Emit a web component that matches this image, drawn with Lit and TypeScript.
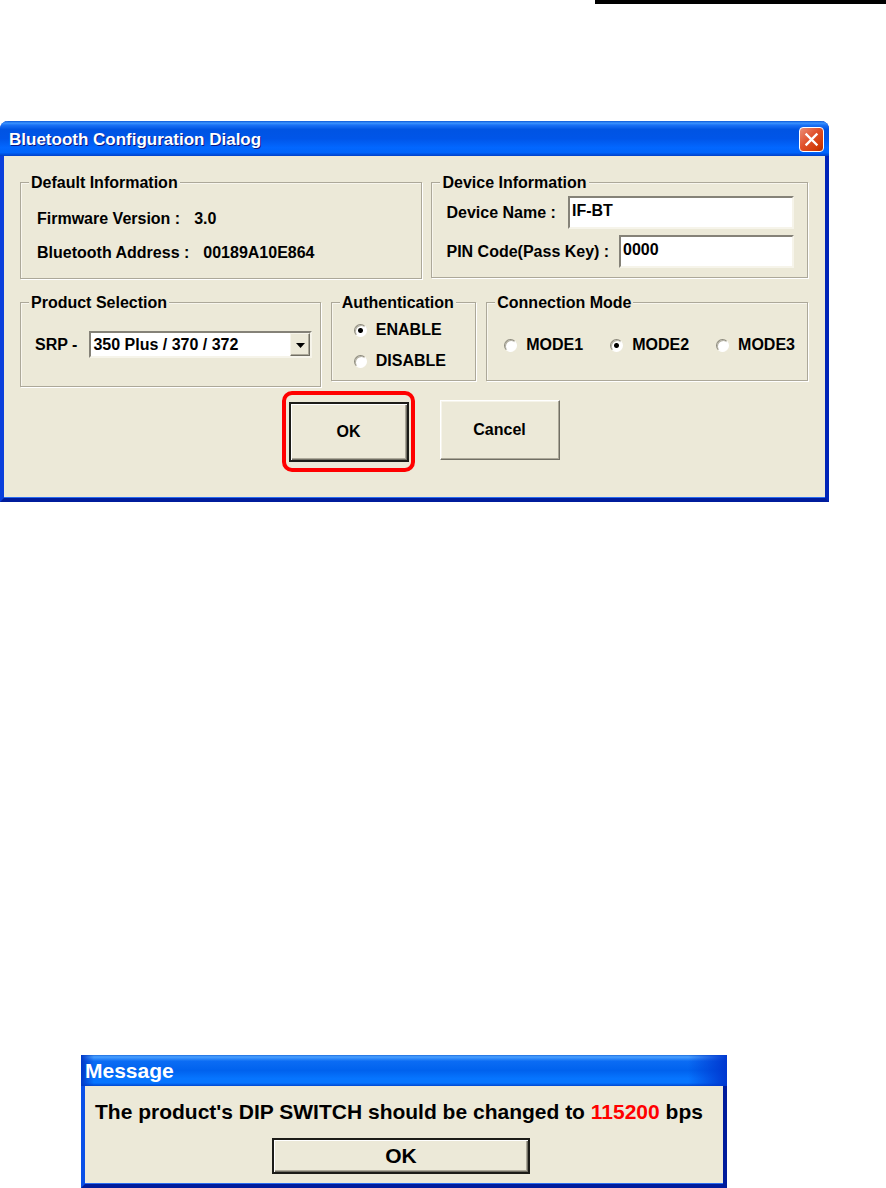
import { LitElement, html, css } from "lit";
import { customElement, property, state } from "lit/decorators.js";

const controls = css`
  * {
    box-sizing: border-box;
  }
  button {
    font: inherit;
    color: #000;
    background: #ece9d8;
    border: 1px solid;
    border-color: #fff #716f64 #716f64 #fff;
    box-shadow: inset -1px -1px #aca899, inset 1px 1px #f6f4ea;
    border-radius: 0;
    padding: 0;
  }
  button.default {
    border: 2px solid #1c1c18;
    box-shadow: inset 1px 1px #fff, inset -1px -1px #716f64, inset -2px -2px #aca899;
  }
`;

@customElement("bt-config-dialog")
class BtConfigDialog extends LitElement {
  @state() private mode = "MODE2";
  @state() private auth = "ENABLE";

  static styles = [
    controls,
    css`
      :host {
        display: block;
        color: #000;
        font: 700 16px/22px "Liberation Sans", Arial, sans-serif;
      }
      .window {
        background: #ece9d8;
        border: solid #0831d9;
        border-width: 0 4px 4px;
        border-color: #0a3fdc #0024b8 #001c9c #0a3fdc;
        border-radius: 8px 8px 0 0;
        box-shadow: inset 0 -1px #2a6cf0;
      }
      .titlebar {
        display: flex;
        align-items: center;
        justify-content: space-between;
        height: 35px;
        margin: 0 -4px;
        padding: 2px 5px 0 9px;
        border-radius: 8px 8px 0 0;
        color: #fff;
        text-shadow: 1px 1px #0a1883;
        background: linear-gradient(
          #0c58d8 0,
          #3a93ff 6%,
          #1a70f4 12%,
          #0054e3 24%,
          #0055e8 50%,
          #0267ff 76%,
          #0064fb 90%,
          #0040c8 100%
        );
      }
      h1 {
        margin: 0;
        font: inherit;
        font-size: 17px;
      }
      .close {
        display: flex;
        width: 25px;
        height: 25px;
        border: 1px solid #fff;
        border-radius: 4px;
        background: linear-gradient(135deg, #eb8f78, #e0512c 45%, #d23c08 80%, #b02c00);
        box-shadow: none;
      }
      .close svg {
        width: 23px;
        height: 23px;
      }
      .body {
        padding: 16px 17px 36px 16px;
      }
      .row {
        display: grid;
        align-items: start;
        gap: 10px;
      }
      .row.top {
        grid-template-columns: 403fr 377fr;
        gap: 9px;
        margin-bottom: 13px;
      }
      .row.middle {
        grid-template-columns: 302fr 146fr 323fr;
      }
      fieldset {
        min-width: 0;
        margin: 0;
        padding: 0;
        border: 1px solid #aca899;
        box-shadow: 1px 1px #fff, inset 1px 1px #f8f6ee;
      }
      legend {
        height: 20px;
        margin-left: 8px;
        padding: 0 2px;
        background: #ece9d8;
        white-space: nowrap;
      }
      .facts {
        display: grid;
        gap: 12px;
        margin: 0;
        padding: 16px 16px 14px;
      }
      .facts div {
        display: flex;
        gap: 14px;
      }
      .facts dd {
        margin: 0;
      }
      .fields {
        display: grid;
        gap: 6px;
        padding: 4px 13px 9px 14px;
      }
      .field {
        display: flex;
        align-items: center;
        justify-content: space-between;
        white-space: nowrap;
      }
      input[type="text"] {
        height: 33px;
        padding: 0 2px 4px;
        font: inherit;
        color: #000;
        background: #fff;
        border: 2px solid;
        border-color: #858278 #f6f4ea #f6f4ea #858278;
        border-radius: 0;
      }
      .name {
        width: 226px;
      }
      .pin {
        width: 175px;
      }
      .product {
        display: flex;
        align-items: center;
        gap: 12px;
        padding: 19px 8px 28px 14px;
        white-space: nowrap;
      }
      .combo {
        position: relative;
        flex: 1;
      }
      select {
        display: block;
        width: 100%;
        height: 27px;
        padding: 0 24px 0 2px;
        appearance: none;
        font: inherit;
        color: #000;
        background: #fff;
        border: 2px solid;
        border-color: #858278 #f6f4ea #f6f4ea #858278;
        border-radius: 0;
      }
      .arrow {
        position: absolute;
        top: 2px;
        right: 2px;
        width: 20px;
        height: 23px;
        pointer-events: none;
        background: #ece9d8;
        border: 1px solid;
        border-color: #f6f4ea #716f64 #716f64 #f6f4ea;
        box-shadow: inset -1px -1px #aca899;
      }
      .radios {
        display: flex;
        justify-content: space-between;
      }
      .auth {
        flex-direction: column;
        gap: 9px;
        padding: 7px 22px 8px;
      }
      .modes {
        padding: 22px 12px 24px 17px;
      }
      .radios label {
        display: flex;
        align-items: center;
        gap: 9px;
      }
      input[type="radio"] {
        appearance: none;
        width: 13px;
        height: 13px;
        margin: 0;
        border: 1px solid;
        border-color: #8c897c #fff #fff #8c897c;
        border-radius: 50%;
        background: #fff;
        box-shadow: inset 1px 1px #b5b2a4;
      }
      input[type="radio"]:checked {
        background: radial-gradient(circle, #000 0 2px, #fff 3px);
      }
      .actions {
        display: flex;
        align-items: flex-start;
        justify-content: center;
        gap: 31px;
        padding: 13px 0 0 20px;
      }
      .actions button {
        display: block;
        width: 120px;
        height: 60px;
      }
      .marked {
        position: relative;
        margin-top: 2px;
      }
      .marked::after {
        content: "";
        position: absolute;
        inset: -11px -6px -10px -7px;
        border: 4px solid #f00;
        border-radius: 10px;
        pointer-events: none;
      }
    `,
  ];

  private radio(group: string, value: string, current: string, pick: (v: string) => void) {
    return html`<label>
      <input type="radio" name=${group} .checked=${value === current} @change=${() => pick(value)} />
      ${value}
    </label>`;
  }

  render() {
    return html`
      <section class="window" role="dialog" aria-labelledby="title">
        <header class="titlebar">
          <h1 id="title">Bluetooth Configuration Dialog</h1>
          <button class="close" aria-label="Close">
            <svg viewBox="0 0 23 23" fill="none" stroke="#fff" stroke-width="2.4" stroke-linecap="square">
              <path d="M6.5 6.5l10 10M16.5 6.5l-10 10" />
            </svg>
          </button>
        </header>
        <div class="body">
          <div class="row top">
            <fieldset>
              <legend>Default Information</legend>
              <dl class="facts">
                <div><dt>Firmware Version :</dt><dd>3.0</dd></div>
                <div><dt>Bluetooth Address :</dt><dd>00189A10E864</dd></div>
              </dl>
            </fieldset>
            <fieldset>
              <legend>Device Information</legend>
              <div class="fields">
                <div class="field">
                  <label for="name">Device Name :</label>
                  <input id="name" class="name" type="text" value="IF-BT" />
                </div>
                <div class="field">
                  <label for="pin">PIN Code(Pass Key) :</label>
                  <input id="pin" class="pin" type="text" value="0000" />
                </div>
              </div>
            </fieldset>
          </div>
          <div class="row middle">
            <fieldset>
              <legend>Product Selection</legend>
              <div class="product">
                <label for="product">SRP -</label>
                <div class="combo">
                  <select id="product">
                    <option>350 Plus / 370 / 372</option>
                  </select>
                  <svg class="arrow" viewBox="0 0 18 21"><path d="M5 9h9l-4.5 5z" /></svg>
                </div>
              </div>
            </fieldset>
            <fieldset>
              <legend>Authentication</legend>
              <div class="radios auth">
                ${["ENABLE", "DISABLE"].map((v) => this.radio("auth", v, this.auth, (x) => (this.auth = x)))}
              </div>
            </fieldset>
            <fieldset>
              <legend>Connection Mode</legend>
              <div class="radios modes">
                ${["MODE1", "MODE2", "MODE3"].map((v) => this.radio("mode", v, this.mode, (x) => (this.mode = x)))}
              </div>
            </fieldset>
          </div>
          <div class="actions">
            <div class="marked"><button class="default">OK</button></div>
            <button>Cancel</button>
          </div>
        </div>
      </section>
    `;
  }
}

@customElement("message-box")
class MessageBox extends LitElement {
  @property() rate = "";

  static styles = [
    controls,
    css`
      :host {
        display: block;
        color: #000;
        font: 700 21px/24px "Liberation Sans", Arial, sans-serif;
      }
      .window {
        background: #ece9d8;
        border: solid;
        border-width: 0 4px 4px;
        border-color: #0a50e8 #001c9c #001c9c #0a50e8;
        box-shadow: inset 0 -1px #2a6cf0;
      }
      h2 {
        margin: 0 -4px;
        padding: 4px 4px 3px;
        font: inherit;
        color: #fff;
        background: linear-gradient(90deg, #0038c8 0, transparent 2% 94%, #0038d0 100%),
          linear-gradient(#1f6fe0 0, #4aa0ff 6%, #0b6cf4 20%, #0062ee 50%, #0675ff 76%, #0675ff 90%, #0048d0 100%);
      }
      .body {
        display: flex;
        flex-direction: column;
        gap: 14px;
        padding: 14px 16px 10px 10px;
      }
      p {
        margin: 0;
      }
      strong {
        color: #f00;
      }
      button {
        align-self: center;
        width: 258px;
        height: 36px;
      }
    `,
  ];

  render() {
    return html`
      <section class="window" role="alertdialog" aria-labelledby="heading">
        <h2 id="heading">Message</h2>
        <div class="body">
          <p>The product's DIP SWITCH should be changed to <strong>${this.rate}</strong> bps</p>
          <button class="default">OK</button>
        </div>
      </section>
    `;
  }
}

@customElement("app-root")
class AppRoot extends LitElement {
  static styles = css`
    :host {
      display: block;
      background: #fff;
    }
    .rule {
      width: 291px;
      height: 4px;
      margin: 0 0 117px auto;
      border: 0;
      background: #000;
    }
    bt-config-dialog {
      max-width: 829px;
    }
    message-box {
      max-width: 646px;
      margin: 553px 0 0 81px;
    }
  `;

  render() {
    return html`
      <hr class="rule" />
      <bt-config-dialog></bt-config-dialog>
      <message-box rate="115200"></message-box>
    `;
  }
}
